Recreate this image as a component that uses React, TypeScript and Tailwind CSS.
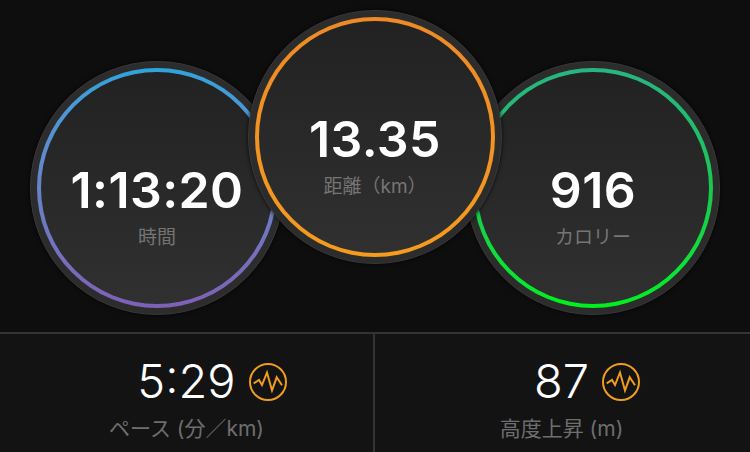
import React from "react";

const font = { fontFamily: '"Inter", "Noto Sans CJK JP", sans-serif' };

function Ring({ ring, value, label, className }: { ring: string; value: string; label: string; className: string }) {
  return (
    <div className={`w-[254px] h-[254px] shrink-0 rounded-full bg-[#2c2c2c] border border-[#383838] p-[6px] shadow-[0_0_4px_rgba(0,0,0,0.8)] ${className}`}>
      <div className={`w-full h-full rounded-full p-[4px] ${ring}`}>
        <div className="w-full h-full rounded-full bg-linear-to-b from-[#222222] to-[#303030] flex flex-col items-center pt-[89px]">
          <div className="text-[50px] leading-[58px] font-semibold text-white tracking-[0.4px]">{value}</div>
          <div className="mt-[6px] text-[19px] leading-[26px] text-[#757575] whitespace-pre">{label}</div>
        </div>
      </div>
    </div>
  );
}

function Pulse() {
  return (
    <svg width="40" height="40" viewBox="0 0 40 40" fill="none" stroke="#f09c1c" strokeWidth="2" className="absolute left-full top-[9px] ml-[12px]">
      <circle cx="20" cy="20" r="18" />
      <path d="M5.7 21.3 11 18l3 5 5-12.5 5 18 4.7-13.2 5.3 8" strokeWidth="2" strokeLinejoin="miter" />
    </svg>
  );
}

function Stat({ value, label, className }: { value: string; label: string; className: string }) {
  return (
    <div className={`flex flex-col items-center pt-[19px] ${className}`}>
      <div className="relative">
        <span className="block text-[47px] leading-[56px] font-light text-white">{value}</span>
        <Pulse />
      </div>
      <div className="mt-[7px] text-[21px] leading-[26px] text-[#6e6e6e] whitespace-pre">{label}</div>
    </div>
  );
}

export default function App() {
  return (
    <div className="w-[750px] h-[452px] overflow-hidden bg-[#0e0e0e] flex flex-col" style={font}>
      <div className="h-[332px] shrink-0 flex justify-center pt-[10px]">
        <Ring ring="bg-linear-to-b from-[#2ea3dc] to-[#7e60b6]" value="1:13:20" label="時間" className="mt-[51px] -mr-[36px]" />
        <Ring ring="bg-linear-to-b from-[#ee8a26] to-[#f59b1e]" value="13.35" label="距離（km）" className="relative z-10" />
        <Ring ring="bg-linear-to-b from-[#28b482] via-[#19c84e] to-[#00f01c]" value="916" label="カロリー" className="mt-[51px] -ml-[36px]" />
      </div>
      <div className="flex-1 grid grid-cols-[375px_1fr] bg-[#131313] border-t-2 border-[#333333]">
        <Stat value="5:29" label="ペース (分／km)" className="border-r-2 border-[#333333]" />
        <Stat value="87" label="高度上昇 (m)" className="pr-[2px]" />
      </div>
    </div>
  );
}
